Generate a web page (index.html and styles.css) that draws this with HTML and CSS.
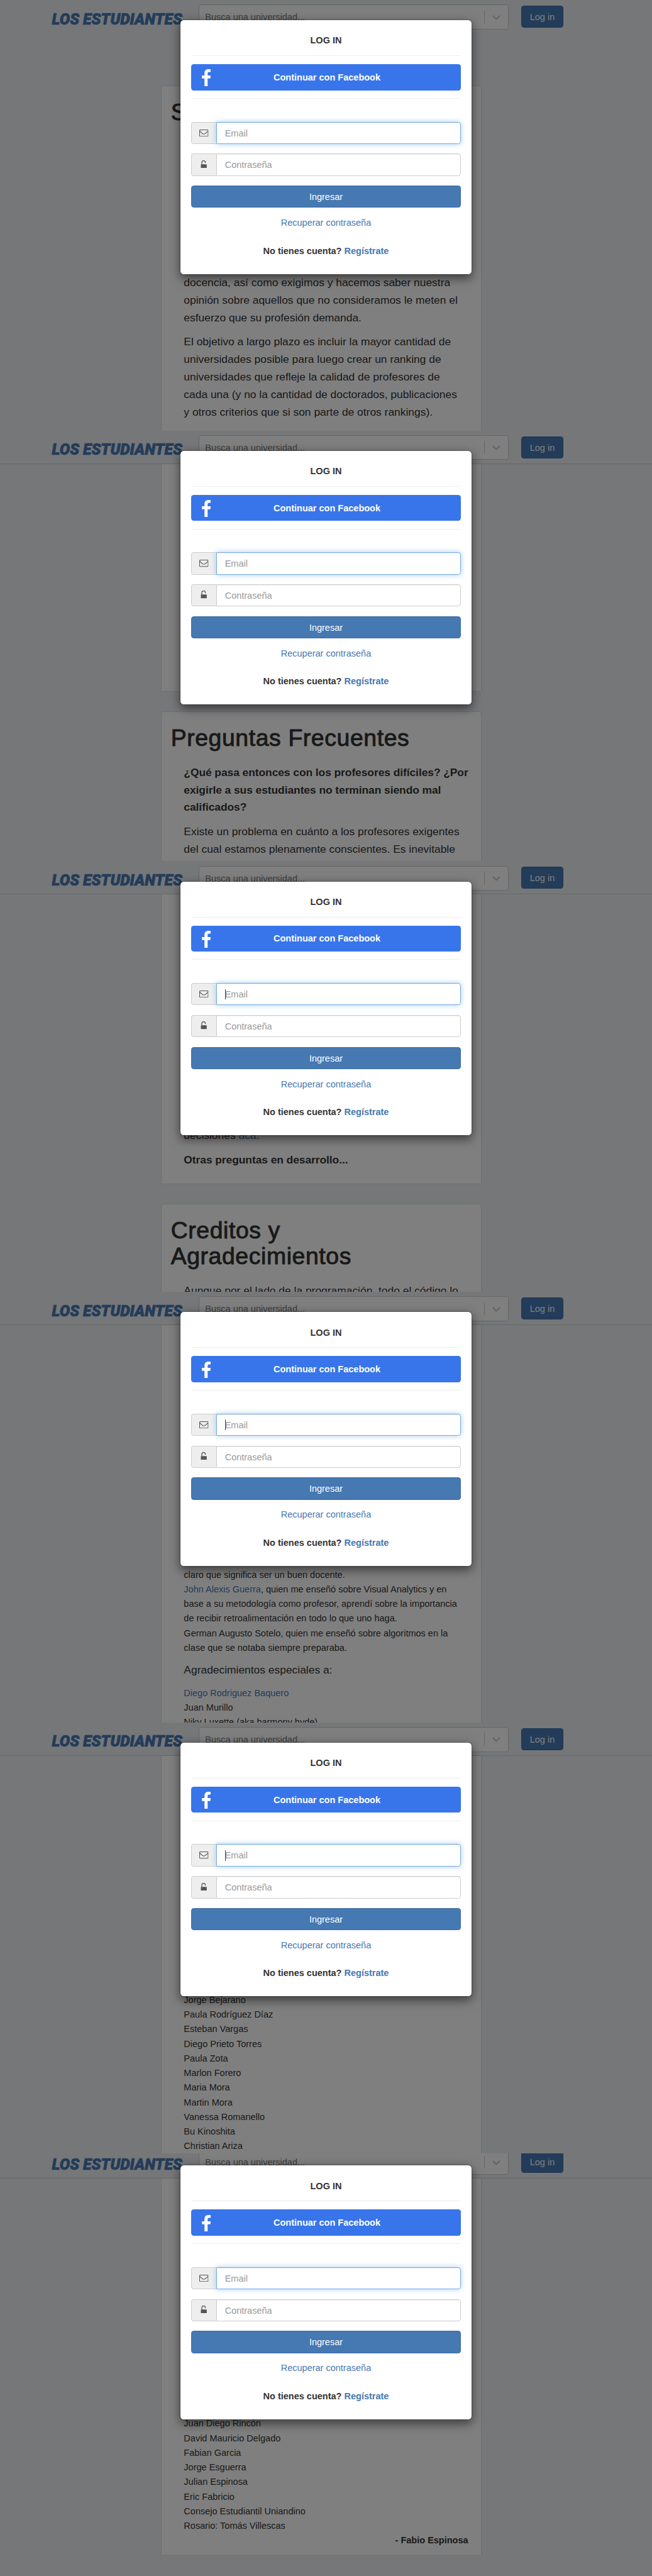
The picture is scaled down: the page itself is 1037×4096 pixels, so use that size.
FILE: index.html
```html
<!DOCTYPE html>
<html lang="es">
<head>
<meta charset="utf-8">
<title>Los Estudiantes</title>
<link rel="stylesheet" href="styles.css">
</head>
<body>
<svg class="defs" width="0" height="0" aria-hidden="true">
  <symbol id="logo" viewBox="0 0 204 24"><text x="0.500" y="20.200" textLength="200" lengthAdjust="spacingAndGlyphs" class="logo-text">LOS ESTUDIANTES</text></symbol>
  <symbol id="chevron" viewBox="0 0 20 20"><path d="M4.516 7.548c0.436-0.446 1.043-0.481 1.576 0l3.908 3.747 3.908-3.747c0.533-0.481 1.141-0.446 1.574 0 0.436 0.445 0.408 1.197 0 1.615-0.406 0.418-4.695 4.502-4.695 4.502-0.217 0.223-0.502 0.335-0.787 0.335s-0.57-0.112-0.789-0.335c0 0-4.287-4.084-4.695-4.502s-0.436-1.17 0-1.615z"/></symbol>
  <symbol id="fb" viewBox="0 0 14 26"><path d="M13.600 0.200V4.300H11.200C9.300 4.300 8.900 5.200 8.900 6.500V9.600H13.600L13 14.200H8.900V26H4.100V14.200H0.200V9.600H4.100V6C4.100 2 6.600 0 10.200 0C11.800 0 13.200 0.100 13.600 0.200Z"/></symbol>
  <symbol id="mail" viewBox="0 0 14 11"><rect x="0.500" y="0.500" width="13" height="10" rx="0.900" fill="none" stroke="#555"/><path d="M0.700 2.300C2 4 3.500 5 5 6.200C6.500 7.500 7.500 7.500 9 6.200C10.500 5 12 4 13.300 2.300" fill="none" stroke="#555"/></symbol>
  <symbol id="unlock" viewBox="0 0 10 12"><path d="M1.900 6V3.500A2.600 2.800 0 0 1 7.400 3.500" fill="none" stroke="#555" stroke-width="1.200" stroke-linecap="round"/><rect x="0.500" y="6" width="9" height="6" rx="0.700" fill="#555"/></symbol>
</svg>

<section class="screen">
  <nav class="navbar navbar-top"><svg class="logo"><use href="#logo"/></svg><div class="search"><span class="search-text">Busca una universidad...</span><i class="search-sep"></i><svg class="search-arrow"><use href="#chevron"/></svg></div><a class="btn-login">Log in</a></nav>
  <main class="page page-first">
    <article class="card card-open">
      <h1>S</h1>
      <div class="copy copy-about">
        <p>docencia, así como exigimos y hacemos saber nuestra<br>opinión sobre aquellos que no consideramos le meten el<br>esfuerzo que su profesión demanda.</p>
        <p>El objetivo a largo plazo es incluir la mayor cantidad de<br>universidades posible para luego crear un ranking de<br>universidades que refleje la calidad de profesores de<br>cada una (y no la cantidad de doctorados, publicaciones<br>y otros criterios que si son parte de otros rankings).</p>
      </div>
    </article>
  </main>
  <div class="backdrop"></div>
  <div class="modal">
    <h4>LOG IN</h4><hr>
    <a class="btn-fb"><svg class="fb-icon"><use href="#fb"/></svg>Continuar con Facebook</a><hr>
    <div class="field field-email"><span class="addon"><svg class="mail-icon"><use href="#mail"/></svg></span><span class="input focus">Email</span></div>
    <div class="field"><span class="addon"><svg class="lock-icon"><use href="#unlock"/></svg></span><span class="input">Contraseña</span></div>
    <a class="btn-enter">Ingresar</a>
    <a class="recover">Recuperar contraseña</a>
    <p class="signup">No tienes cuenta? <a>Regístrate</a></p>
  </div>
</section>

<section class="screen">
  <nav class="navbar"><svg class="logo"><use href="#logo"/></svg><div class="search"><span class="search-text">Busca una universidad...</span><i class="search-sep"></i><svg class="search-arrow"><use href="#chevron"/></svg></div><a class="btn-login">Log in</a></nav>
  <main class="page">
    <article class="card card-tail card-tail-about"></article>
    <article class="card card-open">
      <h1>Preguntas Frecuentes</h1>
      <div class="copy">
        <p class="strong">¿Qué pasa entonces con los profesores difíciles? ¿Por<br>exigirle a sus estudiantes no terminan siendo mal<br>calificados?</p>
        <p>Existe un problema en cuánto a los profesores exigentes<br>del cual estamos plenamente conscientes. Es inevitable</p>
      </div>
    </article>
  </main>
  <div class="backdrop"></div>
  <div class="modal">
    <h4>LOG IN</h4><hr>
    <a class="btn-fb"><svg class="fb-icon"><use href="#fb"/></svg>Continuar con Facebook</a><hr>
    <div class="field field-email"><span class="addon"><svg class="mail-icon"><use href="#mail"/></svg></span><span class="input focus">Email</span></div>
    <div class="field"><span class="addon"><svg class="lock-icon"><use href="#unlock"/></svg></span><span class="input">Contraseña</span></div>
    <a class="btn-enter">Ingresar</a>
    <a class="recover">Recuperar contraseña</a>
    <p class="signup">No tienes cuenta? <a>Regístrate</a></p>
  </div>
</section>

<section class="screen">
  <nav class="navbar"><svg class="logo"><use href="#logo"/></svg><div class="search"><span class="search-text">Busca una universidad...</span><i class="search-sep"></i><svg class="search-arrow"><use href="#chevron"/></svg></div><a class="btn-login">Log in</a></nav>
  <main class="page">
    <article class="card card-tail card-tail-faq">
      <div class="copy">
        <p>decisiones <a>acá.</a></p>
        <p class="strong">Otras preguntas en desarrollo...</p>
      </div>
    </article>
    <article class="card card-open">
      <h1>Creditos y<br>Agradecimientos</h1>
      <div class="copy">
        <p>Aunque por el lado de la programación, todo el código lo</p>
      </div>
    </article>
  </main>
  <div class="backdrop"></div>
  <div class="modal">
    <h4>LOG IN</h4><hr>
    <a class="btn-fb"><svg class="fb-icon"><use href="#fb"/></svg>Continuar con Facebook</a><hr>
    <div class="field field-email"><span class="addon"><svg class="mail-icon"><use href="#mail"/></svg></span><span class="input focus caret">Email</span></div>
    <div class="field"><span class="addon"><svg class="lock-icon"><use href="#unlock"/></svg></span><span class="input">Contraseña</span></div>
    <a class="btn-enter">Ingresar</a>
    <a class="recover">Recuperar contraseña</a>
    <p class="signup">No tienes cuenta? <a>Regístrate</a></p>
  </div>
</section>

<section class="screen">
  <nav class="navbar"><svg class="logo"><use href="#logo"/></svg><div class="search"><span class="search-text">Busca una universidad...</span><i class="search-sep"></i><svg class="search-arrow"><use href="#chevron"/></svg></div><a class="btn-login">Log in</a></nav>
  <main class="page">
    <article class="card card-body card-thanks">
      <div class="copy">
        <p class="small">claro que significa ser un buen docente.<br><a>John Alexis Guerra</a>, quien me enseñó sobre Visual Analytics y en<br>base a su metodología como profesor, aprendí sobre la importancia<br>de recibir retroalimentación en todo lo que uno haga.<br>German Augusto Sotelo, quien me enseñó sobre algoritmos en la<br>clase que se notaba siempre preparaba.</p>
        <p>Agradecimientos especiales a:</p>
        <p class="small"><a>Diego Rodriguez Baquero</a><br>Juan Murillo<br>Niky Luxette (aka harmony hyde)</p>
      </div>
    </article>
  </main>
  <div class="backdrop"></div>
  <div class="modal">
    <h4>LOG IN</h4><hr>
    <a class="btn-fb"><svg class="fb-icon"><use href="#fb"/></svg>Continuar con Facebook</a><hr>
    <div class="field field-email"><span class="addon"><svg class="mail-icon"><use href="#mail"/></svg></span><span class="input focus caret">Email</span></div>
    <div class="field"><span class="addon"><svg class="lock-icon"><use href="#unlock"/></svg></span><span class="input">Contraseña</span></div>
    <a class="btn-enter">Ingresar</a>
    <a class="recover">Recuperar contraseña</a>
    <p class="signup">No tienes cuenta? <a>Regístrate</a></p>
  </div>
</section>

<section class="screen">
  <nav class="navbar"><svg class="logo"><use href="#logo"/></svg><div class="search"><span class="search-text">Busca una universidad...</span><i class="search-sep"></i><svg class="search-arrow"><use href="#chevron"/></svg></div><a class="btn-login">Log in</a></nav>
  <main class="page">
    <article class="card card-body card-names">
      <div class="copy">
        <p class="small">Jorge Bejarano<br>Paula Rodríguez Díaz<br>Esteban Vargas<br>Diego Prieto Torres<br>Paula Zota<br>Marlon Forero<br>Maria Mora<br>Martin Mora<br>Vanessa Romanello<br>Bu Kinoshita<br>Christian Ariza</p>
      </div>
    </article>
  </main>
  <div class="backdrop"></div>
  <div class="modal">
    <h4>LOG IN</h4><hr>
    <a class="btn-fb"><svg class="fb-icon"><use href="#fb"/></svg>Continuar con Facebook</a><hr>
    <div class="field field-email"><span class="addon"><svg class="mail-icon"><use href="#mail"/></svg></span><span class="input focus caret">Email</span></div>
    <div class="field"><span class="addon"><svg class="lock-icon"><use href="#unlock"/></svg></span><span class="input">Contraseña</span></div>
    <a class="btn-enter">Ingresar</a>
    <a class="recover">Recuperar contraseña</a>
    <p class="signup">No tienes cuenta? <a>Regístrate</a></p>
  </div>
</section>

<section class="screen screen-last">
  <div class="shift">
  <nav class="navbar"><svg class="logo"><use href="#logo"/></svg><div class="search"><span class="search-text">Busca una universidad...</span><i class="search-sep"></i><svg class="search-arrow"><use href="#chevron"/></svg></div><a class="btn-login">Log in</a></nav>
  <main class="page">
    <article class="card card-tail card-end">
      <div class="copy">
        <p class="small">Juan Diego Rincón<br>David Mauricio Delgado<br>Fabian Garcia<br>Jorge Esguerra<br>Julian Espinosa<br>Eric Fabricio<br>Consejo Estudiantil Uniandino<br>Rosario: Tomás Villescas</p>
        <p class="small strong sign">- Fabio Espinosa</p>
      </div>
    </article>
  </main>
  <div class="backdrop"></div>
  <div class="modal">
    <h4>LOG IN</h4><hr>
    <a class="btn-fb"><svg class="fb-icon"><use href="#fb"/></svg>Continuar con Facebook</a><hr>
    <div class="field field-email"><span class="addon"><svg class="mail-icon"><use href="#mail"/></svg></span><span class="input focus">Email</span></div>
    <div class="field"><span class="addon"><svg class="lock-icon"><use href="#unlock"/></svg></span><span class="input">Contraseña</span></div>
    <a class="btn-enter">Ingresar</a>
    <a class="recover">Recuperar contraseña</a>
    <p class="signup">No tienes cuenta? <a>Regístrate</a></p>
  </div>
  </div>
</section>
</body>
</html>
```
FILE: styles.css
```css
* { box-sizing: border-box; }
html { background: #77787a; }
body {
  margin: 0;
  width: 1000px;
  zoom: 1.037;
  font: 14px/20px "Liberation Sans", Arial, sans-serif;
  color: #333;
}
a { color: #4678b2; text-decoration: none; }
.defs { position: absolute; }

.screen { position: relative; height: 660.3px; overflow: hidden; background: #edeff2; }
.screen-last { height: 648.4px; }
.shift { position: relative; height: 660.4px; margin-top: -12px; }

.navbar { display: flex; height: 51px; padding: 7px 0 0 79px; border-bottom: 1px solid #ccd0d5; }
.navbar-top { border-color: transparent; }
.logo { width: 204px; height: 24px; margin: 10px 21.700px 0 0; fill: #4678b2; flex: none; }
.logo-text { font: italic 900 24.500px Roboto, sans-serif; stroke: #4678b2; stroke-width: 0.700px; }
.search { display: flex; align-items: center; width: 475.500px; height: 38px; border: 1px solid #ccc; border-radius: 4px; background: #fff; }
.search-text { flex: 1; padding: 1px 0 0 9px; color: #808080; }
.search-sep { width: 1px; height: 20px; background: #ccc; }
.search-arrow { width: 20px; height: 20px; margin: 0 8px; fill: #ccc; }
.btn-login { width: 64.500px; height: 34px; margin: 1.500px 0 0 19.300px; border: 1px solid #3f6ca3; border-radius: 4px; background: #4678b2; color: #fff; line-height: 33px; text-align: center; }

.page { margin-left: 247px; width: 492px; }
.page-first { padding-top: 80px; }
.card { border: 1px solid #d8dde0; background: #fff; padding: 0 20px 0 15px; }
.card-open { height: 640px; border-radius: 4px 4px 0 0; padding-top: 20.500px; }
.card-tail { margin-bottom: 30px; border-top: 0; border-bottom: 1.500px solid #d8e0e0; }
.card-tail-about { height: 349px; }
.card-tail-faq { height: 444px; padding-top: 356.800px; }
.card-body { height: 640px; border-top: 0; }
.card-thanks { padding-top: 371.900px; }
.card-names { padding-top: 363.800px; }
.card-end { height: 579px; padding-top: 364.900px; }

h1 { margin: 0 0 20px -1px; font-size: 36px; font-weight: 400; line-height: 39.600px; letter-spacing: 0.600px; -webkit-text-stroke: 0.900px #333; }
.copy { margin-left: 19px; white-space: nowrap; }
.copy-about { padding-top: 208.800px; }
.copy p { margin: 0 0 10px; font-size: 16.800px; line-height: 26.880px; }
.copy .small { font-size: 14px; line-height: 22.400px; }
.copy .strong { font-weight: 700; letter-spacing: -0.060px; }
.copy .sign { margin-top: -10px; text-align: right; letter-spacing: 0; }

.backdrop { position: absolute; inset: 0; background: rgba(0, 0, 0, 0.5); }
.modal {
  position: absolute;
  top: 30px;
  left: 276px;
  width: 448px;
  height: 391px;
  padding: 0 16px;
  border: 1px solid rgba(0, 0, 0, 0.2);
  border-radius: 6px;
  background: #fff;
  background-clip: padding-box;
  box-shadow: 0 5px 15px rgba(0, 0, 0, 0.5);
  text-align: center;
}
h4 { margin: 21.500px 0 12.500px; font-size: 14px; line-height: 20px; }
hr { margin: 0; height: 1px; border: 0; background: #eee; }
.btn-fb { display: flex; align-items: center; justify-content: center; position: relative; height: 40px; margin: 12.500px 0 12px; border-radius: 4px; background: #3875ea; color: #fff; font-weight: 700; padding: 1px 0 0 3px; }
.fb-icon { position: absolute; left: 17px; top: 8px; width: 14px; height: 26px; fill: #fff; }
.field { display: flex; height: 34px; margin-bottom: 15px; text-align: left; }
.field-email { margin-top: 35.300px; }
.addon { display: flex; align-items: center; justify-content: center; width: 39px; border: 1px solid #ccc; border-right: 0; border-radius: 4px 0 0 4px; background: #eee; }
.mail-icon { width: 14px; height: 11px; }
.lock-icon { width: 10px; height: 12px; margin-top: -2px; }
.input { flex: 1; border: 1px solid #ccc; border-radius: 0 4px 4px 0; padding-left: 12px; color: #999; line-height: 33px; box-shadow: inset 0 1px 1px rgba(0, 0, 0, 0.075); }
.focus { border-color: #74ace6; box-shadow: inset 0 1px 1px rgba(0, 0, 0, 0.075), 0 0 8px rgba(116, 172, 230, 0.6); }
.caret::before { content: ""; display: inline-block; width: 1px; height: 16px; margin-right: -1px; background: #333; vertical-align: -3px; }
.btn-enter { display: block; height: 34px; border: 1px solid #3f6ca3; border-radius: 4px; background: #4678b2; color: #fff; line-height: 33px; }
.recover { display: block; margin-top: 13.400px; }
.signup { margin: 22.700px 0 0; font-weight: 700; }
```
